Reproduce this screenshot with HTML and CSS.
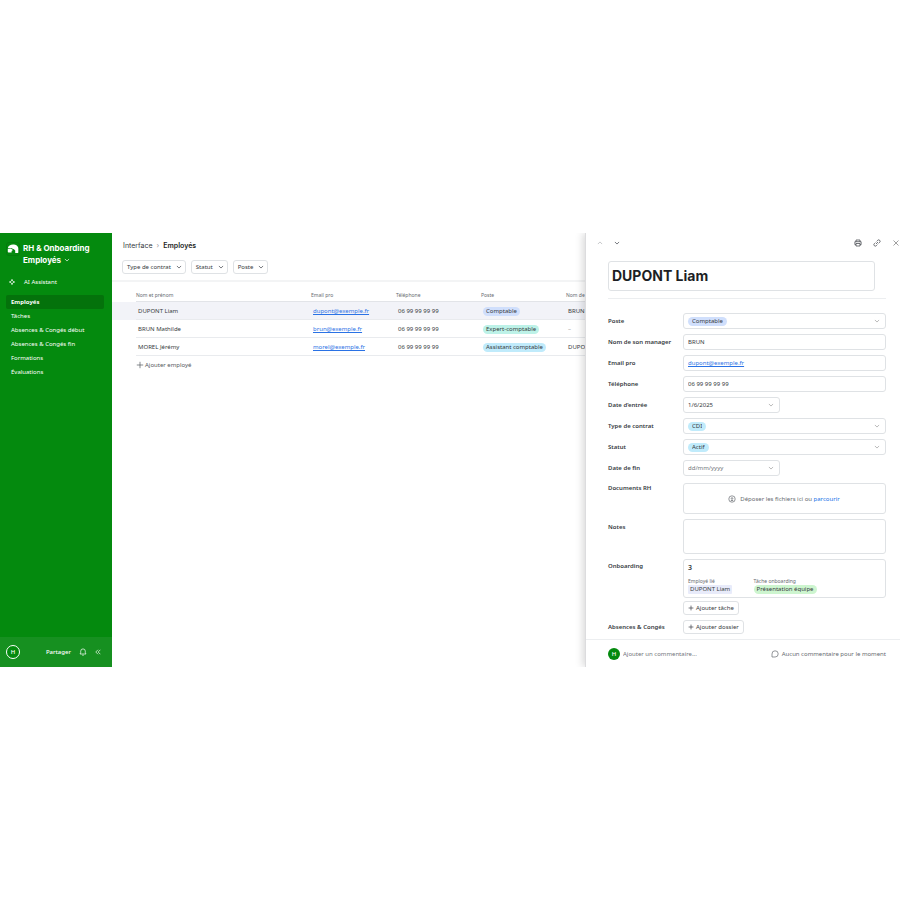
FILE: index.html
```html
<!DOCTYPE html>
<html lang="fr">
<head>
<meta charset="utf-8">
<meta name="viewport" content="width=device-width, initial-scale=1">
<title>RH &amp; Onboarding – Employés</title>
<link rel="stylesheet" href="styles.css">
</head>
<body>
<svg class="sprite" aria-hidden="true">
  <symbol id="down" viewBox="0 0 8 8"><path d="M1.200 2.600 4 5.400 6.800 2.600"/></symbol>
  <symbol id="up" viewBox="0 0 8 8"><path d="M1.200 5.400 4 2.600 6.800 5.400"/></symbol>
  <symbol id="plus" viewBox="0 0 8 8"><path d="M4 .8v6.400M.8 4h6.400"/></symbol>
</svg>
<div class="app">
  <aside class="sidebar">
    <header class="brand">
      <span class="logo">
        <svg viewBox="0 0 12 12"><path d="M.8 5.200C1.200 2.900 3.400 1.600 6 1.600c3 0 5.300 1.500 5.300 4v3.600c0 .6-.3.900-.8.900H8.200V7.600L6.900 6.300 4 4.900z"/><path d="M.8 6 3.600 5.600 6 6.900 4.600 8v1.400H1.500C1 9.400.8 9.200.8 8.700z"/></svg>
      </span>
      <h1>RH &amp; Onboarding <span>Employés <svg class="icon small"><use href="#down"/></svg></span></h1>
    </header>
    <a class="assistant" href="#assistant"><svg class="icon" viewBox="0 0 8 8"><path d="M4 1.300 4.800 3.200 6.700 4 4.800 4.800 4 6.700 3.200 4.800 1.300 4 3.200 3.200z"/></svg>AI Assistant</a>
    <nav class="nav">
      <a class="active" href="#employes">Employés</a>
      <a href="#taches">Tâches</a>
      <a href="#absences-debut">Absences &amp; Congés début</a>
      <a href="#absences-fin">Absences &amp; Congés fin</a>
      <a href="#formations">Formations</a>
      <a href="#evaluations">Évaluations</a>
    </nav>
    <footer class="account">
      <span class="avatar outline">H</span>
      <button class="share" type="button">Partager</button>
      <button type="button" aria-label="Notifications"><svg class="icon" viewBox="0 0 8 8"><path d="M1 6h6L6.300 4.800V3.200a2.300 2.300 0 0 0-4.600 0v1.600zM3.200 7.200h1.600"/></svg></button>
      <button type="button" aria-label="Réduire"><svg class="icon small" viewBox="0 0 8 8"><path d="M4 1 1 4 4 7M7.200 1l-3 3 3 3"/></svg></button>
    </footer>
  </aside>

  <main class="list">
    <header class="toolbar">
      <div class="crumbs"><a href="#interface">Interface</a><span class="sep">›</span><strong>Employés</strong></div>
      <div class="filters">
        <button type="button">Type de contrat<svg class="icon small"><use href="#down"/></svg></button>
        <button type="button">Statut<svg class="icon small"><use href="#down"/></svg></button>
        <button type="button">Poste<svg class="icon small"><use href="#down"/></svg></button>
      </div>
    </header>
    <table>
      <colgroup><col class="gutter"><col class="name"><col class="mid"><col class="mid"><col class="mid"><col></colgroup>
      <thead>
        <tr><td></td><th>Nom et prénom</th><th>Email pro</th><th>Téléphone</th><th>Poste</th><th>Nom de son manager</th></tr>
      </thead>
      <tbody>
        <tr class="selected"><td></td><td>DUPONT Liam</td><td><a href="mailto:dupont@exemple.fr">dupont@exemple.fr</a></td><td>06 99 99 99 99</td><td><span class="pill blue">Comptable</span></td><td>BRUN</td></tr>
        <tr><td></td><td>BRUN Mathilde</td><td><a href="mailto:brun@exemple.fr">brun@exemple.fr</a></td><td>06 99 99 99 99</td><td><span class="pill teal">Expert-comptable</span></td><td class="empty">–</td></tr>
        <tr><td></td><td>MOREL Jérémy</td><td><a href="mailto:morel@exemple.fr">morel@exemple.fr</a></td><td>06 99 99 99 99</td><td><span class="pill cyan">Assistant comptable</span></td><td>DUPONT</td></tr>
      </tbody>
    </table>
    <button class="add-row" type="button"><svg class="icon"><use href="#plus"/></svg>Ajouter employé</button>
  </main>

  <section class="panel" aria-label="Fiche employé">
    <header class="panel-bar">
      <div class="pager">
        <button class="faint" type="button" aria-label="Précédent"><svg class="icon small"><use href="#up"/></svg></button>
        <button type="button" aria-label="Suivant"><svg class="icon small"><use href="#down"/></svg></button>
      </div>
      <div class="actions">
        <button type="button" aria-label="Imprimer"><svg class="icon" viewBox="0 0 8 8"><path d="M2 2.700V1h4v1.700M2 5.700H.9v-3h6.200v3H6M2 4.500h4V7H2z"/></svg></button>
        <button type="button" aria-label="Copier le lien"><svg class="icon" viewBox="0 0 8 8"><path d="M3 5 5 3M3.600 2.400 4.700 1.300a1.400 1.400 0 0 1 2 2L5.600 4.400M4.400 5.600 3.300 6.700a1.400 1.400 0 0 1-2-2L2.400 3.600"/></svg></button>
        <button class="close" type="button" aria-label="Fermer"><svg class="icon" viewBox="0 0 8 8"><path d="m1.500 1.500 5 5M6.500 1.500l-5 5"/></svg></button>
      </div>
    </header>
    <form class="record">
      <input class="title" type="text" value="DUPONT Liam" aria-label="Nom et prénom">
      <div class="fields">
        <label for="poste">Poste</label>
        <div class="control"><select id="poste" class="pill blue"><option>Comptable</option></select><svg class="icon small"><use href="#down"/></svg></div>
        <label for="manager">Nom de son manager</label>
        <input class="control" id="manager" type="text" value="BRUN">
        <label for="email">Email pro</label>
        <input class="control mail" id="email" type="email" value="dupont@exemple.fr">
        <label for="tel">Téléphone</label>
        <input class="control" id="tel" type="tel" value="06 99 99 99 99">
        <label for="entree">Date d’entrée</label>
        <div class="control date"><input id="entree" type="text" value="1/6/2025"><svg class="icon small"><use href="#down"/></svg></div>
        <label for="contrat">Type de contrat</label>
        <div class="control"><select id="contrat" class="pill cyan"><option>CDI</option></select><svg class="icon small"><use href="#down"/></svg></div>
        <label for="statut">Statut</label>
        <div class="control"><select id="statut" class="pill cyan"><option>Actif</option></select><svg class="icon small"><use href="#down"/></svg></div>
        <label for="fin">Date de fin</label>
        <div class="control date"><input id="fin" type="text" placeholder="dd/mm/yyyy"><svg class="icon small"><use href="#down"/></svg></div>
        <span class="label">Documents RH</span>
        <div class="control drop"><svg class="icon" viewBox="0 0 8 8"><circle cx="4" cy="4" r="3.200"/><path d="M4 5.600V2.600M2.800 3.800 4 2.600l1.200 1.200M2.800 5.500h2.400"/></svg><span>Déposer les fichiers ici ou <a href="#parcourir">parcourir</a></span></div>
        <label for="notes">Notes</label>
        <textarea class="control" id="notes"></textarea>
        <span class="label">Onboarding</span>
        <div class="stack">
          <article class="control card">
            <h3>3</h3>
            <dl>
              <div><dt>Employé lié</dt><dd><span class="tag">DUPONT Liam</span></dd></div>
              <div><dt>Tâche onboarding</dt><dd><span class="pill green">Présentation équipe</span></dd></div>
            </dl>
          </article>
          <button class="add" type="button"><svg class="icon small"><use href="#plus"/></svg>Ajouter tâche</button>
        </div>
        <span class="label">Absences &amp; Congés</span>
        <button class="add" type="button"><svg class="icon small"><use href="#plus"/></svg>Ajouter dossier</button>
      </div>
    </form>
    <footer class="comments">
      <span class="avatar">H</span>
      <input type="text" placeholder="Ajouter un commentaire..." aria-label="Ajouter un commentaire">
      <span class="count"><svg class="icon" viewBox="0 0 8 8"><path d="M1 7V4a3.100 3.100 0 1 1 3.100 3z"/></svg>Aucun commentaire pour le moment</span>
    </footer>
  </section>
</div>
</body>
</html>
```
FILE: styles.css
```css
* { box-sizing: border-box; }

body {
  margin: 0;
  min-height: 100vh;
  display: grid;
  align-items: center;
  background: #fff;
  color: #363a41;
  font: 6px/8px "Noto Sans", "Open Sans", sans-serif;
}

button, input, select, textarea {
  margin: 0;
  padding: 0;
  border: 0;
  background: none;
  color: inherit;
  font: inherit;
  outline: none;
}

button { display: flex; align-items: center; }
a { color: inherit; text-decoration: none; }
h1, h3, dl, dd { margin: 0; }
.sprite { display: none; }

.icon {
  flex: none;
  width: 8px;
  height: 8px;
  fill: none;
  stroke: currentColor;
  stroke-width: 0.7;
}

.icon.small { width: 6px; height: 6px; stroke-width: 0.9; }

.app {
  display: grid;
  grid-template-columns: 112px minmax(0, 1fr) 35%;
}

/* Sidebar */
.sidebar {
  display: flex;
  flex-direction: column;
  background: #048a0e;
  color: #fff;
}

.brand { display: flex; gap: 3px; padding: 9px 6px 0; }

.logo {
  flex: none;
  width: 14px;
  height: 14px;
  border: 1px solid #047c0c;
  border-radius: 3px;
}

.logo svg { display: block; width: 12px; height: 12px; fill: #fff; }

.brand h1 {
  font: 700 8px/12px Inter, sans-serif;
  white-space: nowrap;
}

.brand h1 span { display: flex; align-items: center; gap: 3px; }

.assistant {
  display: flex;
  align-items: center;
  gap: 8px;
  padding: 12px 8px 0;
}

.nav { display: flex; flex-direction: column; padding: 9px 8px 0 6px; }
.nav a { padding: 3px 5px; border-radius: 2px; white-space: nowrap; }
.nav .active { background: #04720b; font-weight: 700; }

.account {
  display: flex;
  align-items: center;
  gap: 8px;
  height: 30px;
  margin-top: auto;
  padding: 0 11px 0 6px;
  background: #169020;
}

.avatar {
  display: grid;
  place-items: center;
  flex: none;
  width: 12px;
  height: 12px;
  border-radius: 50%;
  background: #048a0e;
  color: #fff;
  font-weight: 500;
}

.avatar.outline { width: 14px; height: 14px; border: 1px solid #fff; }
.share { margin-left: auto; font-weight: 500; }

/* Employee list */
.list { overflow: hidden; }

.toolbar {
  height: 49px;
  padding: 7px 10px 0;
  border-bottom: 2px solid #f3f4f5;
}

.crumbs {
  display: flex;
  gap: 4px;
  font: 7px/12px Inter, sans-serif;
  padding-left: 1px;
}

.crumbs strong { color: #1d1f25; font-weight: 600; }
.sep { color: #999; }
.filters { display: flex; gap: 5px; padding-top: 8px; }

.filters button {
  gap: 5px;
  height: 14px;
  padding: 0 3px 0 4px;
  border: 1px solid #dfe2e5;
  border-radius: 3px;
}

table {
  width: 100%;
  min-width: 530px;
  table-layout: fixed;
  border-collapse: separate;
  border-spacing: 0;
}

.gutter { width: 24px; }
.name { width: 175px; }
.mid { width: 85px; }

thead tr { height: 20px; }
th, td { padding: 0; text-align: left; white-space: nowrap; }

th {
  padding-top: 7px;
  color: #666a70;
  font-size: 5px;
  font-weight: 400;
  border-bottom: 1px solid #e2e4e8;
}

tbody tr { height: 18px; }
tbody td { padding: 1px 0 0 2px; }
tbody td + td { border-bottom: 1px solid #e9ebee; }
tbody a, .mail { color: #2a72e5; text-decoration: underline; }
.selected { background: #f2f3f8; }
.empty { color: #999; }

.pill {
  display: inline-block;
  height: 9px;
  padding: 0 4px;
  border-radius: 5px;
  line-height: 9px;
}

td .pill { padding: 0 3px; }
.blue { background: #d0dffc; }
.teal { background: #bdf2e8; }
.cyan { background: #c0ebfb; }
.green { background: #cdf5cf; }

.add-row { gap: 1px; padding: 5px 24px; color: #555960; }

/* Record panel */
.panel {
  position: relative;
  border-left: 1px solid #dcdcde;
  box-shadow: -2px 0 8px rgba(0, 0, 0, 0.16);
  clip-path: inset(0 0 0 -16px);
  background: #fff;
}

.panel-bar {
  display: flex;
  align-items: center;
  justify-content: space-between;
  height: 20px;
  padding: 0 0 0 11px;
}

.pager, .actions { display: flex; gap: 11px; }
.faint { opacity: 0.4; }
.close { color: #777; }

.record { padding: 8px 14px 5px 22px; }

.title {
  display: block;
  width: 96%;
  height: 30px;
  padding: 0 3px 1px;
  border: 1px solid #dfe2e5;
  border-radius: 3px;
  color: #1d1f25;
  font: 700 14px/20px Inter, sans-serif;
}

.fields {
  display: grid;
  grid-template-columns: 70px minmax(0, 1fr);
  gap: 5px;
  margin-top: 7px;
  padding-top: 14px;
  border-top: 1px solid #eceef0;
}

.fields label, .label { padding-top: 4px; font-weight: 600; white-space: nowrap; }
.fields .label { padding-top: 3px; }

.control {
  display: flex;
  align-items: center;
  justify-content: space-between;
  width: 100%;
  height: 16px;
  padding: 0 5px 0 4px;
  border: 1px solid #dfe2e5;
  border-radius: 3px;
}

.control > .icon.small { color: #999; }
.control.date { width: 48%; }
.control.date input { min-width: 0; flex: 1; }
.control select { appearance: none; field-sizing: content; }
::placeholder { color: #72767c; opacity: 1; }

.control.drop { justify-content: center; gap: 4px; height: 31px; margin-top: 2px; color: #666a70; }
.drop a { color: #1672e8; }
textarea.control { height: 35px; resize: none; }

.stack { display: grid; gap: 3px; }
.control.card { display: block; height: auto; padding: 4px 4px 3px; }
.card h3 { font-size: 7px; line-height: 8px; font-weight: 600; }
.card dl { display: flex; padding-top: 5px; }
.card dl div { width: 34%; white-space: nowrap; }
.card dt { font-size: 5px; color: #666a70; }
.card dd { line-height: 9px; }
.card .pill { padding: 0 3px; }
.tag { display: inline-block; padding: 0 2px; border-radius: 1px; background: #e8ebfa; }

.add {
  justify-self: start;
  gap: 2px;
  height: 14px;
  padding: 0 4px;
  border: 1px solid #dfe2e5;
  border-radius: 3px;
}

.comments {
  display: flex;
  align-items: center;
  gap: 3px;
  height: 28px;
  padding: 0 14px 0 22px;
  border-top: 1px solid #eceef0;
  color: #666a70;
}

.comments input { flex: 1; min-width: 0; }
.count { display: flex; align-items: center; gap: 3px; white-space: nowrap; }
```
